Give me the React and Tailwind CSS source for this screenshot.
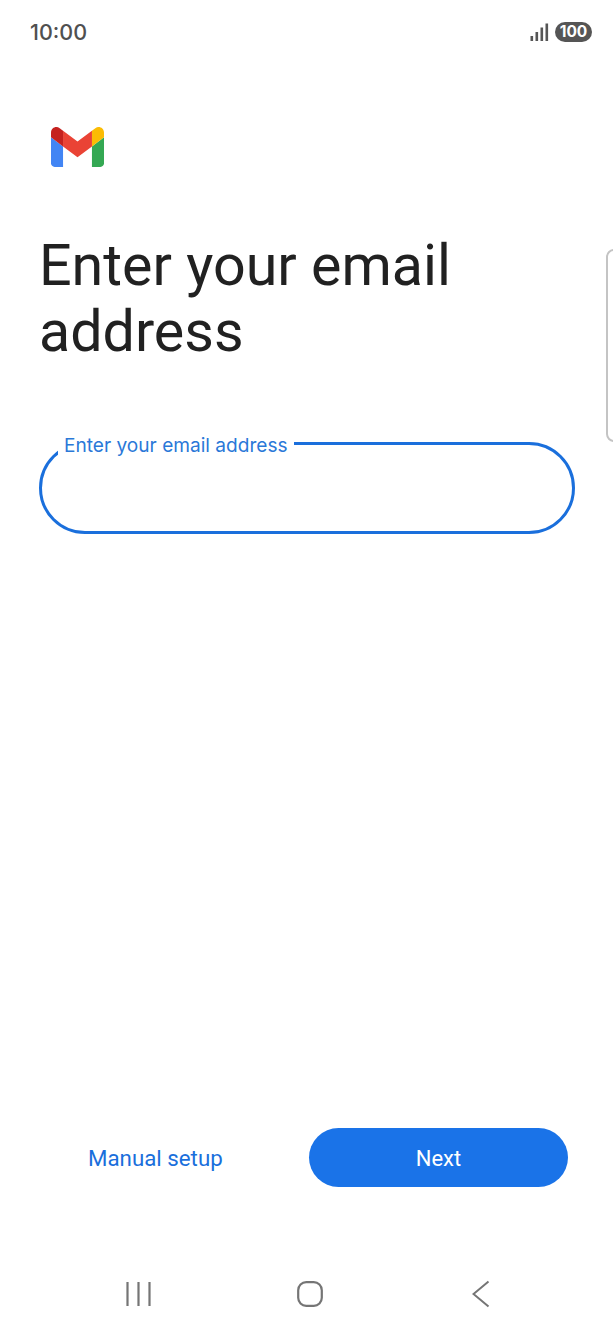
const GmailLogo = () => (
  <svg width="53" height="40" viewBox="52 42 88 66" className="block">
    <path fill="#4285f4" d="M58 108h14V74L52 59v43c0 3.32 2.69 6 6 6" />
    <path fill="#34a853" d="M120 108h14c3.32 0 6-2.69 6-6V59l-20 15" />
    <path fill="#fbbc04" d="M120 48v26l20-15v-8c0-7.42-8.47-11.65-14.4-7.2" />
    <path fill="#ea4335" d="M72 74V48l24 18 24-18v26L96 92" />
    <path fill="#c5221f" d="M52 51v8l20 15V48l-5.6-4.2c-5.94-4.45-14.4-.22-14.4 7.2" />
  </svg>
);

const Signal = () => (
  <svg width="19" height="18" viewBox="0 0 19 18" className="block">
    <rect x="0.5" y="13" width="2.6" height="5" fill="#555" />
    <rect x="5.5" y="9" width="2.6" height="9" fill="#555" />
    <rect x="10.5" y="4.5" width="2.6" height="13.5" fill="#555" />
    <rect x="15.5" y="0.5" width="2.6" height="17.5" fill="#555" />
  </svg>
);

const App = () => {
  return (
    <div className="relative h-[1330px] bg-white flex flex-col font-['Roboto',sans-serif] overflow-hidden">
      {/* Status bar */}
      <div className="h-[64px] pl-[30px] pr-[21px] flex items-center justify-between">
        <span className="text-[21.5px] font-medium text-[#505050] font-['Inter',sans-serif]">
          10:00
        </span>
        <div className="flex items-center gap-[6px]">
          <Signal />
          <span className="w-[37px] h-[20px] rounded-full bg-[#555] text-white text-[15.5px] font-bold flex items-center justify-center font-['Inter',sans-serif]">
            100
          </span>
        </div>
      </div>

      <div className="pl-[51px] pt-[63px]">
        <GmailLogo />
      </div>

      <h1 className="pl-[39px] pt-[66px] text-[57.4px] leading-[66px] text-[#212121] font-normal">
        Enter your email
        <br />
        address
      </h1>

      {/* Email field */}
      <div className="relative mt-[77px] mx-[38.5px] h-[92px] rounded-[46px] border-[3px] border-[#1a6fdc]">
        <span className="absolute left-[16.5px] -top-[12px] bg-white px-[6px] text-[19.1px] leading-[24px] text-[#2a78d8] font-['Inter',sans-serif] font-normal">
          Enter your email address
        </span>
      </div>

      <div className="flex-1" />

      {/* Actions */}
      <div className="flex items-center pl-[88px] pr-[45px] justify-between">
        <span className="text-[22.3px] text-[#1a6fdc] pt-[2px]">Manual setup</span>
        <button className="w-[259px] h-[59px] rounded-full bg-[#1a73e8] text-white text-[22px] font-normal pt-[2px]">
          Next
        </button>
      </div>

      {/* Nav bar */}
      <div className="h-[143px] pt-[93px]">
        <div className="flex items-start pl-[125px]">
          <svg width="26" height="26" viewBox="0 0 26 26" className="mt-[1px] block">
            <path d="M2.5 1v24M13.5 1v24M24.5 1v24" stroke="#757575" strokeWidth="2.2" fill="none" />
          </svg>
          <svg width="28" height="28" viewBox="0 0 28 28" className="block ml-[145px]">
            <rect x="2.2" y="2.2" width="23.6" height="23.6" rx="8" stroke="#757575" strokeWidth="2.2" fill="none" />
          </svg>
          <svg width="20" height="28" viewBox="0 0 20 28" className="block ml-[148px]">
            <path d="M16.5 1.5 1.5 14l15 12.5" stroke="#757575" strokeWidth="2" fill="none" />
          </svg>
        </div>
      </div>

      {/* Edge panel handle */}
      <div className="absolute left-[606px] top-[249px] w-[12px] h-[193px] rounded-l-[8px] border-2 border-[#c4c4c4]" />
    </div>
  );
};

export default App;
